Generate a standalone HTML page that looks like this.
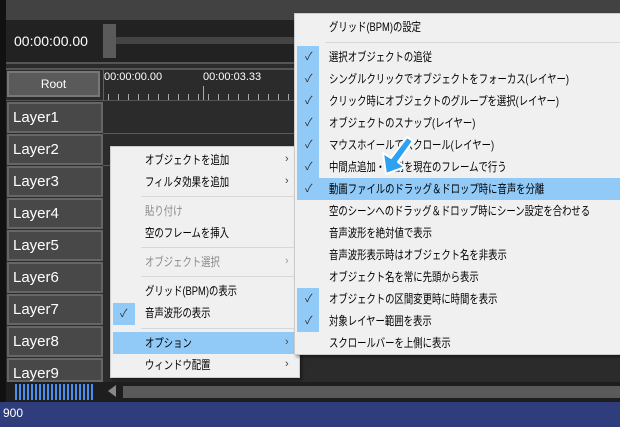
<!DOCTYPE html>
<html><head><meta charset="utf-8"><style>
*{margin:0;padding:0;box-sizing:border-box}
body{width:620px;height:427px;overflow:hidden;background:#2b2b2b;position:relative;font-family:"Liberation Sans","Noto Sans CJK JP",sans-serif;}
.a{position:absolute}
.lay{position:absolute;left:7px;width:96px;height:31px;background:#484848;border:2px solid #666;color:#fff;font-size:15px;line-height:27px;padding-left:4px}
.hl{position:absolute;left:103px;width:200px;height:1px;background:#5a5a5a}
.m{position:absolute;background:#f0f0f0;border:1px solid #ccc;box-shadow:2px 2px 3px rgba(0,0,0,.4);overflow:hidden}
.it{position:absolute;font-size:12px;color:#000;white-space:nowrap;line-height:22px;height:22px;transform:scaleX(0.78);transform-origin:0 0}
.g{color:#8a8a8a}
.sep{position:absolute;height:1px;background:#d7d7d7}
.ar{position:absolute;font-size:11px;color:#444}
.ck{position:absolute;width:22px;background:#91c9f7}
.c{position:absolute;left:10px;font-size:11px;color:#333;line-height:22px}
</style></head><body>
<div class="a" style="left:0;top:0;width:620px;height:20px;background:#424242"></div>
<div class="a" style="left:0;top:0;width:6px;height:427px;background:#111"></div>
<div class="a" style="left:6px;top:20px;width:614px;height:42px;background:#222"></div>
<div class="a" style="left:6px;top:62px;width:614px;height:2px;background:#555"></div>
<div class="a" style="left:14px;top:33px;color:#fff;font-size:14px">00:00:00.00</div>
<div class="a" style="left:103px;top:24px;width:13px;height:34px;background:#5a5a5a"></div>
<div class="a" style="left:116px;top:37px;width:200px;height:7px;background:#444"></div>
<div class="a" style="left:6px;top:68px;width:614px;height:2px;background:#555"></div>
<div class="a" style="left:7px;top:71px;width:93px;height:26px;background:#5a5a5a;border:2px solid #777;color:#fff;font-size:12px;text-align:center;line-height:22px">Root</div>
<div class="a" style="left:103px;top:70px;width:1px;height:30px;background:#c33"></div>
<div class="a" style="left:104px;top:71px;color:#fff;font-size:11px">00:00:00.00</div>
<div class="a" style="left:203px;top:71px;color:#fff;font-size:11px">00:00:03.33</div>
<div class="a" style="left:203px;top:86px;width:1px;height:14px;background:#aaa"></div>
<div class="a" style="left:108px;top:94px;width:190px;height:6px;background:repeating-linear-gradient(90deg,#aaa 0 1px,transparent 1px 10px)"></div>
<div class="a" style="left:6px;top:100px;width:614px;height:1px;background:#555"></div>
<div class="lay" style="top:102px">Layer1</div>
<div class="lay" style="top:134px">Layer2</div>
<div class="lay" style="top:166px">Layer3</div>
<div class="lay" style="top:198px">Layer4</div>
<div class="lay" style="top:230px">Layer5</div>
<div class="lay" style="top:262px">Layer6</div>
<div class="lay" style="top:294px">Layer7</div>
<div class="lay" style="top:326px">Layer8</div>
<div class="lay" style="top:358px;height:24px">Layer9</div>
<div class="hl" style="top:133px"></div><div class="hl" style="top:165px"></div>
<div class="a" style="left:6px;top:382px;width:614px;height:20px;background:#1e1e1e"></div>
<div class="a" style="left:15px;top:384px;width:78px;height:16px;background:repeating-linear-gradient(90deg,#4a8ff0 0 2px,transparent 2px 4px)"></div>
<div class="a" style="left:108px;top:385px;width:0;height:0;border-top:6px solid transparent;border-bottom:6px solid transparent;border-right:8px solid #888"></div>
<div class="a" style="left:123px;top:386px;width:497px;height:12px;background:#5a5a5a"></div>
<div class="a" style="left:0;top:402px;width:620px;height:25px;background:#2f3d7c;color:#fff;font-size:12px;line-height:22px;padding-left:3px">900</div>

<div class="m" style="left:110px;top:146px;width:190px;height:232px">
<div class="it" style="left:34px;top:2px">オブジェクトを追加</div><div class="ar" style="left:174px;top:6px">›</div>
<div class="it" style="left:34px;top:24px">フィルタ効果を追加</div><div class="ar" style="left:174px;top:28px">›</div>
<div class="sep" style="left:30px;top:49px;width:156px"></div>
<div class="it g" style="left:34px;top:53px">貼り付け</div>
<div class="it" style="left:34px;top:75px">空のフレームを挿入</div>
<div class="sep" style="left:30px;top:100px;width:156px"></div>
<div class="it g" style="left:34px;top:104px">オブジェクト選択</div><div class="ar" style="left:174px;top:108px;color:#999">›</div>
<div class="sep" style="left:30px;top:129px;width:156px"></div>
<div class="it" style="left:34px;top:133px">グリッド(BPM)の表示</div>
<div class="ck" style="left:2px;top:156px;height:22px"><span class="c" style="left:7px;top:0">✓</span></div>
<div class="it" style="left:34px;top:155px">音声波形の表示</div>
<div class="sep" style="left:30px;top:181px;width:156px"></div>
<div class="a" style="left:2px;top:185px;width:182px;height:22px;background:#91c9f7"></div>
<div class="it" style="left:34px;top:185px">オプション</div><div class="ar" style="left:174px;top:189px">›</div>
<div class="it" style="left:34px;top:207px">ウィンドウ配置</div><div class="ar" style="left:174px;top:211px">›</div>
</div>

<div class="m" style="left:294px;top:13px;width:330px;height:342px">
<div class="it" style="left:34px;top:2px">グリッド(BPM)の設定</div>
<div class="sep" style="left:30px;top:28px;width:300px"></div>
<div class="ck" style="left:2px;top:32px;height:154px"></div>
<div class="a" style="left:2px;top:164px;width:330px;height:22px;background:#91c9f7"></div>
<div class="ck" style="left:2px;top:274px;height:44px"></div>
<span class="c" style="top:32px">✓</span><span class="c" style="top:54px">✓</span><span class="c" style="top:76px">✓</span><span class="c" style="top:98px">✓</span><span class="c" style="top:120px">✓</span><span class="c" style="top:142px">✓</span><span class="c" style="top:164px">✓</span><span class="c" style="top:274px">✓</span><span class="c" style="top:296px">✓</span>
<div class="it" style="left:34px;top:32px">選択オブジェクトの追従</div>
<div class="it" style="left:34px;top:54px">シングルクリックでオブジェクトをフォーカス(レイヤー)</div>
<div class="it" style="left:34px;top:76px">クリック時にオブジェクトのグループを選択(レイヤー)</div>
<div class="it" style="left:34px;top:98px">オブジェクトのスナップ(レイヤー)</div>
<div class="it" style="left:34px;top:120px">マウスホイールでスクロール(レイヤー)</div>
<div class="it" style="left:34px;top:142px">中間点追加・分割を現在のフレームで行う</div>
<div class="it" style="left:34px;top:164px">動画ファイルのドラッグ＆ドロップ時に音声を分離</div>
<div class="it" style="left:34px;top:186px">空のシーンへのドラッグ＆ドロップ時にシーン設定を合わせる</div>
<div class="it" style="left:34px;top:208px">音声波形を絶対値で表示</div>
<div class="it" style="left:34px;top:230px">音声波形表示時はオブジェクト名を非表示</div>
<div class="it" style="left:34px;top:252px">オブジェクト名を常に先頭から表示</div>
<div class="it" style="left:34px;top:274px">オブジェクトの区間変更時に時間を表示</div>
<div class="it" style="left:34px;top:296px">対象レイヤー範囲を表示</div>
<div class="it" style="left:34px;top:318px">スクロールバーを上側に表示</div>
</div>
<svg class="a" style="left:0;top:0" width="620" height="427"><polygon points="407,137 413,141 398,162 405,167 386,174 383,153 391,158" fill="#2ea2f0" stroke="#fff" stroke-width="2" stroke-linejoin="round"/></svg>
</body></html>
